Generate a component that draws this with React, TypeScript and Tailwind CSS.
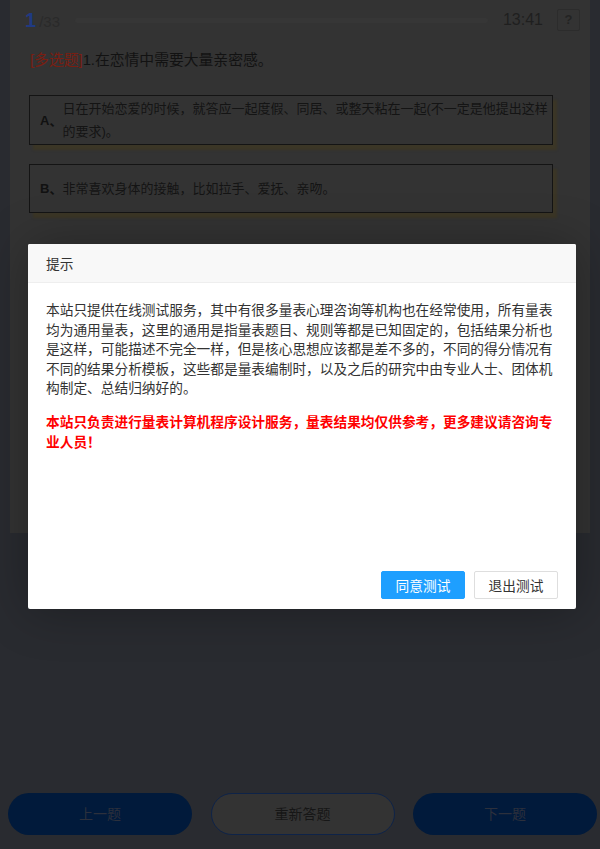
import React from "react";

const FONT = { fontFamily: '"Liberation Sans", "Noto Sans CJK SC", sans-serif' };

function Option({ label, text }: { label: string; text: string }) {
  return (
    <div className="ml-[19px] w-[524px] min-h-[49px] py-px pl-[10px] pr-[4px] flex items-center border border-[#141414] bg-[#333333] shadow-[4px_5px_2px_#3b3626]">
      <span className="shrink-0 text-[13px] font-bold text-[#111111] leading-[23px]">{label}</span>
      <span className="text-[13px] text-[#141414] leading-[23px]">{text}</span>
    </div>
  );
}

export default function App() {
  return (
    <div className="relative w-[600px] h-[849px] bg-[#292b30] overflow-hidden" style={FONT}>
      {/* page card */}
      <div className="mx-[10px] w-[580px] h-[533px] bg-[#333333] flex flex-col">
        {/* top bar */}
        <div className="h-[40px] flex items-center pl-[15px] pr-[10px]">
          <div className="flex items-baseline">
            <span className="text-[20px] font-bold text-[#203a82]">1</span>
            <span className="ml-[3px] text-[15px] text-[#2a2a2a]">/33</span>
          </div>
          <div className="flex-1 mx-[15px] h-[5px] rounded-full bg-[#363636]" />
          <span className="text-[16px] text-[#1f1f1f]">13:41</span>
          <div className="ml-[14px] w-[23px] h-[22px] border border-[#2c2c2c] rounded-[2px] flex items-center justify-center text-[13px] font-bold text-[#232323]">
            ?
          </div>
        </div>
        {/* question */}
        <div className="mt-[10px] pl-[20px] text-[14.8px] leading-[20px] text-[#121212]">
          <span className="text-[#7a1e12]">[多选题]</span>
          <span>1.在恋情中需要大量亲密感。</span>
        </div>
        <div className="mt-[25px] flex flex-col gap-[19px]">
          <Option label="A、" text="日在开始恋爱的时候，就答应一起度假、同居、或整天粘在一起(不一定是他提出这样的要求)。" />
          <Option label="B、" text="非常喜欢身体的接触，比如拉手、爱抚、亲吻。" />
        </div>
      </div>

      {/* bottom buttons */}
      <div className="mt-[260px] pl-[8px] pr-[3px] flex justify-between">
        <div className="w-[184px] h-[42px] rounded-full bg-[#011a3b] flex items-center justify-center text-[14px] text-[#2c303c]">
          上一题
        </div>
        <div className="w-[184px] h-[42px] rounded-full bg-[#333333] border border-[#0e2348] flex items-center justify-center text-[14px] text-[#161616]">
          重新答题
        </div>
        <div className="w-[184px] h-[42px] rounded-full bg-[#011a3b] flex items-center justify-center text-[14px] text-[#2c303c]">
          下一题
        </div>
      </div>

      {/* modal */}
      <div
        className="absolute left-[28px] top-[244px] w-[548px] h-[365px] bg-white rounded-[2px] shadow-[1px_1px_50px_rgba(0,0,0,0.3)] flex flex-col"
        style={{ fontFamily: '"Noto Sans CJK SC", "Liberation Sans", sans-serif' }}
      >
        <div className="h-[39px] shrink-0 bg-[#f8f8f8] border-b border-[#eeeeee] rounded-t-[2px] px-[18px] flex items-center text-[13.7px] text-[#333333]">
          提示
        </div>
        <div className="flex-1 px-[18px] pt-[17px]">
          <p className="text-[13.7px] leading-[19.5px] text-[#333333]">
            本站只提供在线测试服务，其中有很多量表心理咨询等机构也在经常使用，所有量表均为通用量表，这里的通用是指量表题目、规则等都是已知固定的，包括结果分析也是这样，可能描述不完全一样，但是核心思想应该都是差不多的，不同的得分情况有不同的结果分析模板，这些都是量表编制时，以及之后的研究中由专业人士、团体机构制定、总结归纳好的。
          </p>
          <p className="mt-[13px] text-[13.7px] leading-[20px] font-bold text-[#ff0000]">
            本站只负责进行量表计算机程序设计服务，量表结果均仅供参考，更多建议请咨询专业人员！
          </p>
        </div>
        <div className="shrink-0 flex justify-end gap-[9px] pr-[18px] pb-[10px]">
          <div className="w-[84px] h-[28px] bg-[#1e9fff] border border-[#1e9fff] rounded-[2px] flex items-center justify-center text-[13.7px] text-white">
            同意测试
          </div>
          <div className="w-[84px] h-[28px] bg-white border border-[#dedede] rounded-[2px] flex items-center justify-center text-[13.7px] text-[#333333]">
            退出测试
          </div>
        </div>
      </div>
    </div>
  );
}
